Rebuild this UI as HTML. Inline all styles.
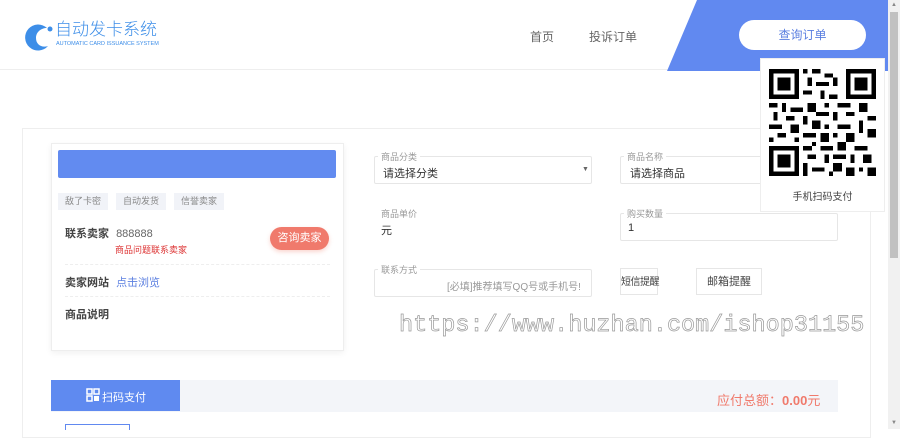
<!DOCTYPE html>
<html><head><meta charset="utf-8"><style>
*{margin:0;padding:0;box-sizing:border-box}
body{width:900px;height:429px;overflow:hidden;background:#fff;font-family:"Liberation Sans","Noto Sans CJK SC",sans-serif;position:relative;font-size:12px;color:#333}
.abs{position:absolute}
.hdr{left:0;top:0;width:888px;height:70px;border-bottom:1px solid #eee;background:#fff}
.nav{font-size:12px;color:#666;top:28px}
.fs{border:1px solid #e6e6e6;border-radius:2px;background:#fff}
.lg{font-size:9px;color:#999;background:#fff;padding:0 3px}
.tag{background:#f1f3f8;color:#888;font-size:9px;height:17px;line-height:17px;padding:0 7px;top:193px}
.btn{border:1px solid #e6e6e6;font-size:11px;color:#444;height:27px;line-height:27px;text-align:center;top:268px;white-space:nowrap}
</style></head><body>
<div class="abs hdr"></div>
<svg class="abs" style="left:22px;top:21px" width="32" height="31" viewBox="0 0 32 31"><path d="M25 7 A13 13 0 1 0 26 25 C20 27 14 24 14 17 C14 11 19 7 25 7Z" fill="#3d8ee8"/><circle cx="28" cy="8" r="2.5" fill="#3d8ee8"/></svg>
<div class="abs" style="left:55px;top:20px;font-size:17px;line-height:19px;color:#3d8ee8;font-weight:300">自动发卡系统</div>
<div class="abs" style="left:56px;top:41px;font-size:5.5px;line-height:6px;color:#3d8ee8;white-space:nowrap">AUTOMATIC CARD ISSUANCE SYSTEM</div>
<div class="abs nav" style="left:530px">首页</div>
<div class="abs nav" style="left:589px">投诉订单</div>
<svg class="abs" style="left:660px;top:0" width="228" height="71"><polygon points="37,0 228,0 228,71 7,71" fill="#6189f0"/></svg>
<div class="abs" style="left:739px;top:20px;width:127px;height:30px;border-radius:15px;background:#fff;color:#5b7fe0;font-size:12px;text-align:center;line-height:30px">查询订单</div>
<div class="abs" style="left:22px;top:128px;width:849px;height:310px;border:1px solid #eee"></div>
<div class="abs" style="left:51px;top:143px;width:293px;height:208px;border:1px solid #eee;box-shadow:0 2px 6px rgba(0,0,0,.06)"></div>
<div class="abs" style="left:58px;top:150px;width:278px;height:28px;background:#628bf0;border-radius:2px"></div>
<div class="abs tag" style="left:58px">敌了卡密</div>
<div class="abs tag" style="left:116px">自动发货</div>
<div class="abs tag" style="left:174px">信誉卖家</div>
<div class="abs" style="left:65px;top:225px;font-size:11px;font-weight:bold;color:#444">联系卖家 <span style="font-weight:normal;color:#666;margin-left:4px">888888</span></div>
<div class="abs" style="left:115px;top:243px;font-size:9px;color:#d33">商品问题联系卖家</div>
<div class="abs" style="left:270px;top:227px;width:59px;height:23px;border-radius:12px;background:#f07a6c;color:#fff;font-size:11px;text-align:center;line-height:23px;box-shadow:0 2px 4px rgba(240,120,100,.3)">咨询卖家</div>
<div class="abs" style="left:65px;top:264px;width:265px;border-top:1px dashed #eee"></div>
<div class="abs" style="left:65px;top:274px;font-size:11px;font-weight:bold;color:#444">卖家网站 <span style="font-weight:normal;color:#5b7fe0;margin-left:4px">点击浏览</span></div>
<div class="abs" style="left:65px;top:296px;width:265px;border-top:1px dashed #eee"></div>
<div class="abs" style="left:65px;top:306px;font-size:11px;font-weight:bold;color:#444">商品说明</div>
<div class="abs fs" style="left:374px;top:156px;width:218px;height:28px"></div>
<div class="abs lg" style="left:378px;top:150px">商品分类</div>
<div class="abs" style="left:383px;top:165px;font-size:11px">请选择分类</div>
<div class="abs" style="left:582px;top:166px;font-size:7px;color:#666">▼</div>
<div class="abs fs" style="left:620px;top:156px;width:218px;height:28px"></div>
<div class="abs lg" style="left:624px;top:150px">商品名称</div>
<div class="abs" style="left:630px;top:165px;font-size:11px">请选择商品</div>
<div class="abs lg" style="left:378px;top:207px">商品单价</div>
<div class="abs" style="left:381px;top:222px;font-size:11px">元</div>
<div class="abs fs" style="left:620px;top:213px;width:218px;height:28px"></div>
<div class="abs lg" style="left:624px;top:207px">购买数量</div>
<div class="abs" style="left:628px;top:222px;font-size:11px">1</div>
<div class="abs fs" style="left:374px;top:269px;width:218px;height:28px"></div>
<div class="abs lg" style="left:378px;top:263px">联系方式</div>
<div class="abs" style="left:447px;top:278px;font-size:10px;color:#999">[必填]推荐填写QQ号或手机号!</div>
<div class="abs btn" style="left:620px;width:38px;font-size:10px;letter-spacing:-0.5px">短信提醒</div>
<div class="abs btn" style="left:696px;width:66px">邮箱提醒</div>
<div class="abs" style="left:399px;top:312px;font-family:'Liberation Mono',monospace;font-size:23.5px;color:#fff;-webkit-text-stroke:0.7px #999;white-space:nowrap">https://www.huzhan.com/ishop31155</div>
<div class="abs" style="left:51px;top:380px;width:787px;height:32px;background:#f3f5f9"></div>
<div class="abs" style="left:51px;top:380px;width:129px;height:31px;background:#5f8af0"></div>
<div class="abs" style="left:102px;top:389px;color:#fff;font-size:11px">扫码支付</div>
<svg class="abs" style="left:86px;top:388px" width="14" height="15"><rect x="1" y="1" width="5" height="5" fill="none" stroke="#fff" stroke-width="1.5"/><rect x="8" y="1" width="5" height="5" fill="none" stroke="#fff" stroke-width="1.5"/><rect x="1" y="8" width="5" height="5" fill="none" stroke="#fff" stroke-width="1.5"/><rect x="8" y="8" width="5" height="5" fill="#fff"/></svg>
<div class="abs" style="left:717px;top:390px;font-size:13px;color:#f07a6c">应付总额：<b>0.00</b>元</div>
<div class="abs" style="left:65px;top:424px;width:65px;height:6px;border:1px solid #6189f0;border-bottom:none"></div>
<div class="abs" style="left:760px;top:58px;width:125px;height:154px;background:#fff;border:1px solid #eee"></div>
<svg class="abs" style="left:769px;top:69px" width="107" height="107" viewBox="0 0 25 25" shape-rendering="crispEdges"><rect width="25" height="25" fill="#fff"/>
<path d="M0 0h7v7h-7zM1 1v5h5v-5zM2 2h3v3h-3zM18 0h7v7h-7zM19 1v5h5v-5zM20 2h3v3h-3zM0 18h7v7h-7zM1 19v5h5v-5zM2 20h3v3h-3z" fill="#000" fill-rule="evenodd"/>
<path d="M8 0h1v1h-1zM10 0h2v1h-2zM13 1h2v1h-2zM9 2h1v2h-1zM11 3h3v1h-3zM15 2h1v2h-1zM8 5h2v1h-2zM12 5h1v2h-1zM14 6h2v1h-2zM0 8h2v1h-2zM3 8h1v2h-1zM5 9h3v1h-3zM9 8h2v2h-2zM13 8h1v1h-1zM16 8h3v1h-3zM21 8h2v2h-2zM1 10h1v2h-1zM4 11h2v1h-2zM8 11h1v2h-1zM11 10h3v1h-3zM15 10h1v2h-1zM18 10h2v1h-2zM23 11h2v1h-2zM0 13h3v1h-3zM5 13h2v2h-2zM10 12h2v2h-2zM13 13h1v1h-1zM16 13h3v1h-3zM21 12h1v3h-1zM2 15h2v1h-2zM8 15h3v1h-3zM12 15h2v2h-2zM15 15h1v1h-1zM18 15h2v2h-2zM23 14h2v2h-2zM0 16h1v1h-1zM6 16h1v1h-1zM10 17h1v1h-1zM8 18h2v1h-2zM12 18h3v1h-3zM16 17h2v2h-2zM20 18h3v1h-3zM9 20h2v1h-2zM13 20h1v2h-1zM15 20h3v1h-3zM19 20h1v2h-1zM22 20h2v2h-2zM8 22h1v2h-1zM10 23h3v1h-3zM15 22h2v2h-2zM18 23h2v2h-2zM21 23h1v1h-1zM23 23h2v2h-2zM8 24h1v1h-1zM14 24h1v1h-1z" fill="#000"/></svg>
<div class="abs" style="left:760px;top:188px;width:125px;text-align:center;font-size:10px;color:#444">手机扫码支付</div>
<div class="abs" style="left:888px;top:0;width:12px;height:429px;background:#f1f1f1"></div>
<div class="abs" style="left:890px;top:12px;width:8px;height:246px;background:#c1c1c1"></div>
<div class="abs" style="left:891px;top:2px;font-size:6px;color:#888">▲</div>
<div class="abs" style="left:891px;top:420px;font-size:6px;color:#888">▼</div>
</body></html>
